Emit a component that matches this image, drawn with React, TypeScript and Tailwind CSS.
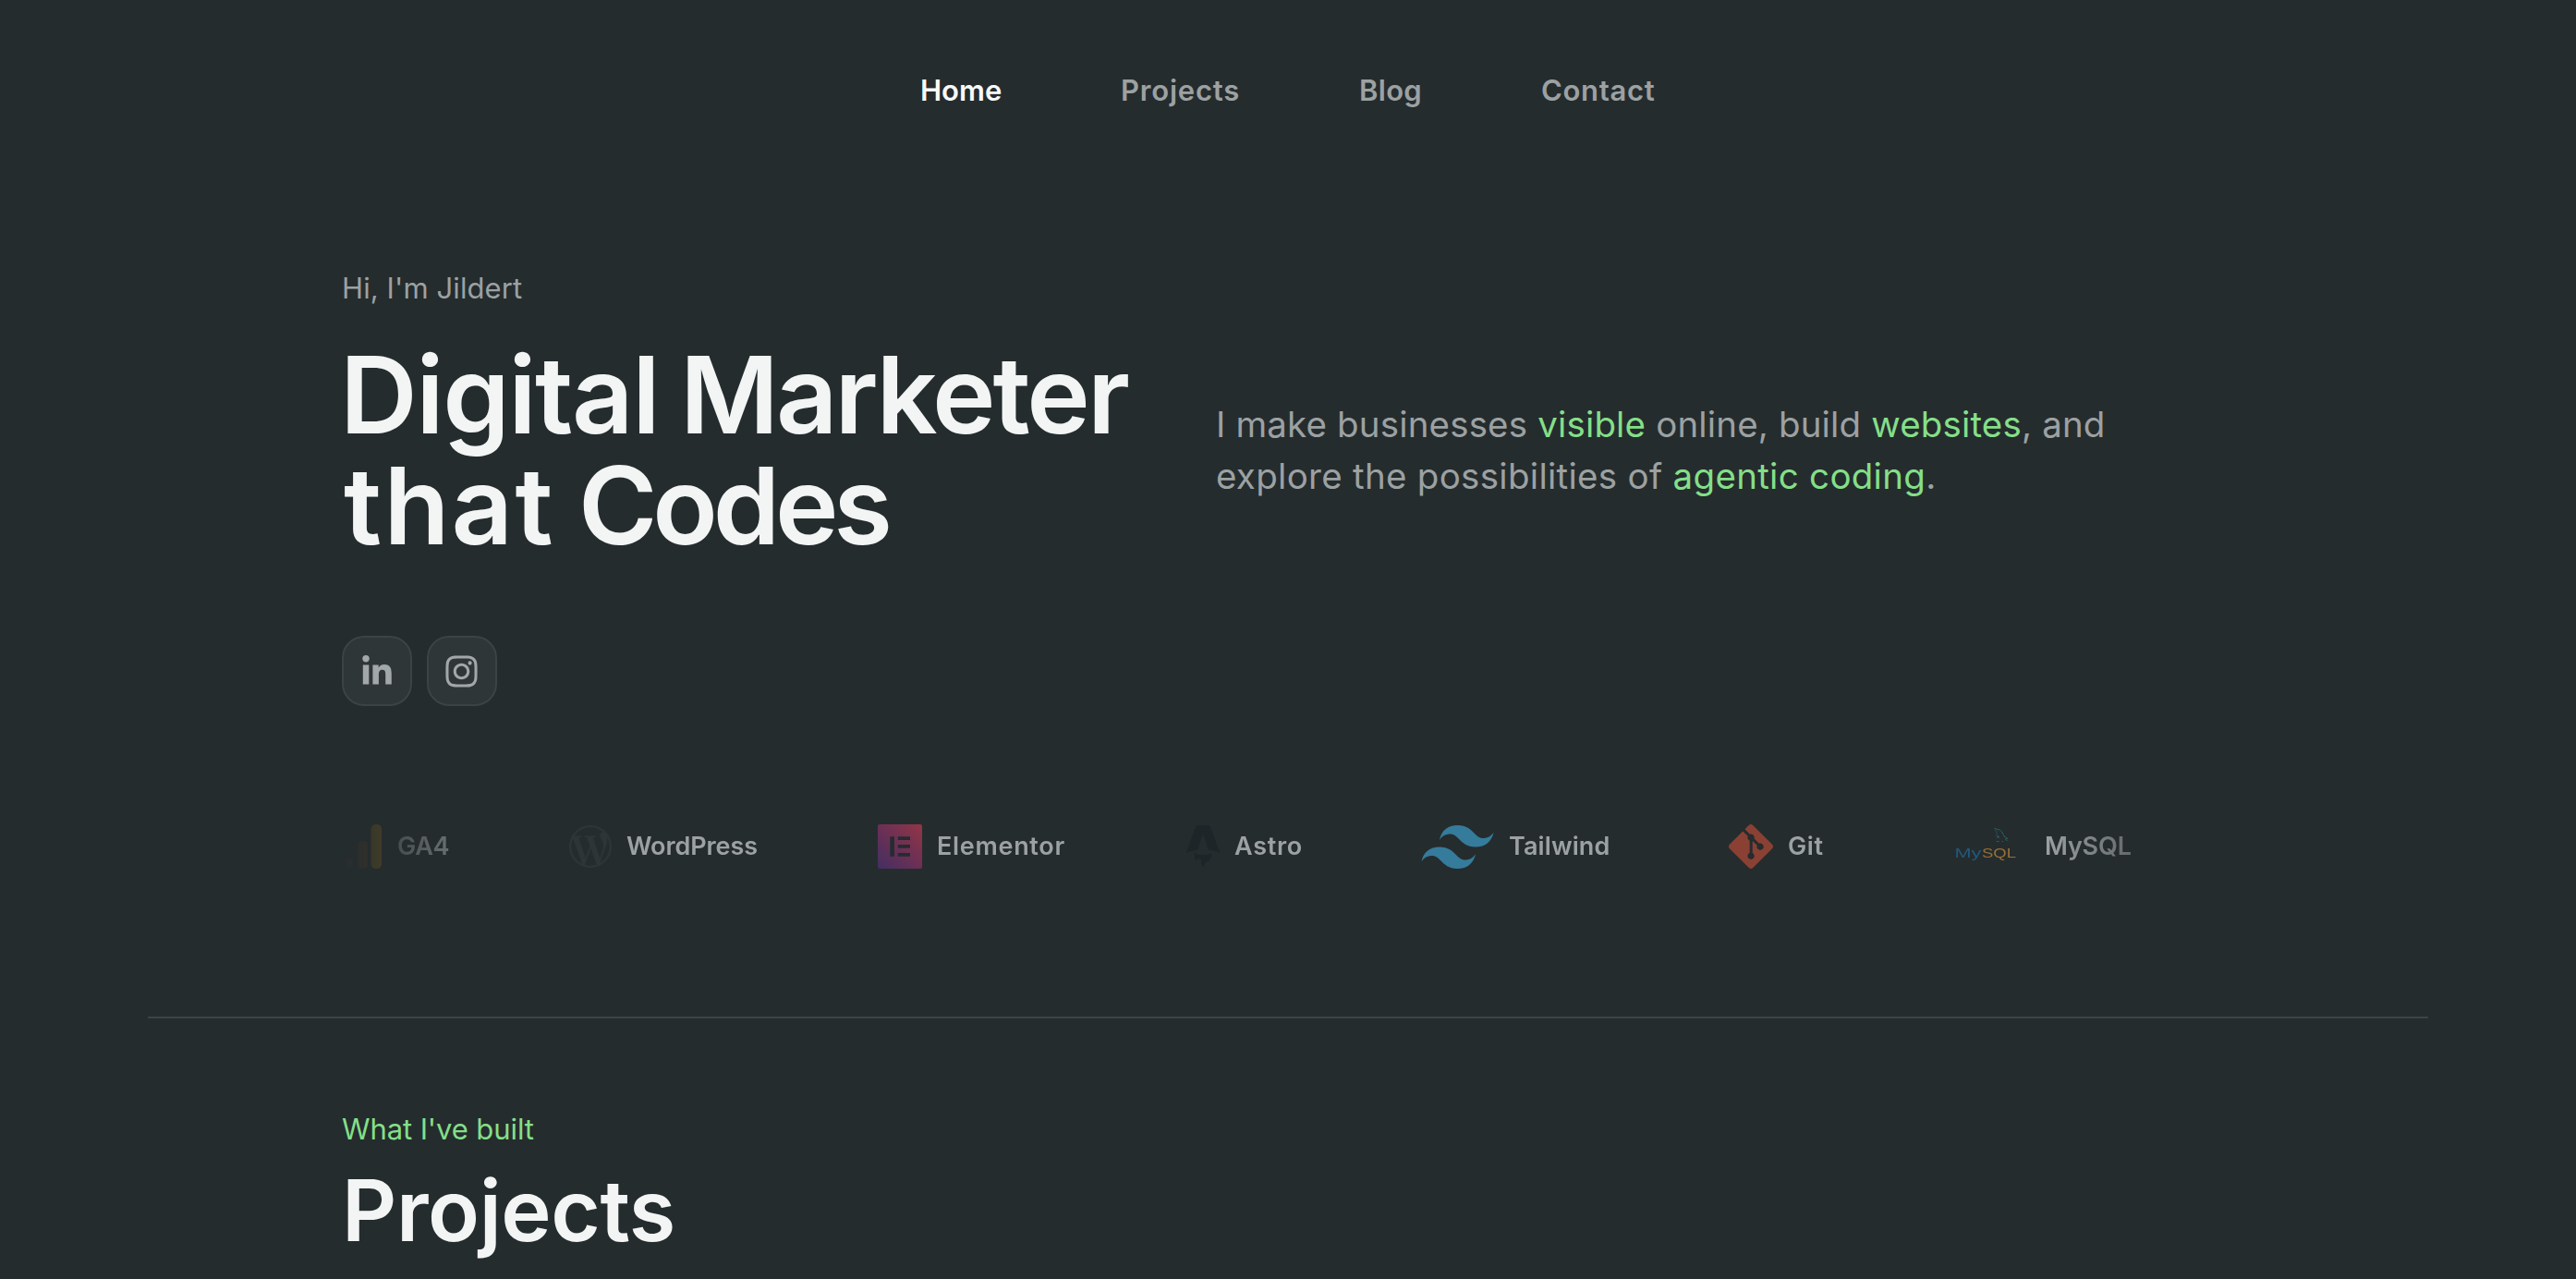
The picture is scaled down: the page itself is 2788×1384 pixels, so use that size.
import type { ReactNode } from "react";
import { FaInstagram, FaLinkedinIn } from "react-icons/fa";
import { SiAstro, SiGit, SiMysql, SiTailwindcss, SiWordpress } from "react-icons/si";

const links = [
  { label: "Home", className: "w-[217px] text-[#f8fafa]" },
  { label: "Projects", className: "w-[258px] tracking-[0.8px] text-[#9ca1a2]" },
  { label: "Blog", className: "w-[197px] tracking-[0.3px] text-[#9ca1a2]" },
  { label: "Contact", className: "tracking-[0.7px] text-[#9ca1a2]" },
];

function AnalyticsIcon() {
  return (
    <svg className="h-12 w-11 opacity-60" viewBox="0 0 44 48">
      <rect x="31.5" width="11.5" height="48" rx="5" fill="#f9ab00" />
      <rect x="17" y="18" width="11" height="30" rx="5" fill="#e37400" opacity="0.7" />
      <circle cx="6" cy="42" r="6" fill="#e37400" />
    </svg>
  );
}

function ElementorIcon() {
  return (
    <svg className="size-12" viewBox="0 0 48 48">
      <defs>
        <linearGradient id="elementor" x1="0" y1="1" x2="1" y2="0">
          <stop offset="0" stopColor="#422f62" />
          <stop offset="0.5" stopColor="#6c3055" />
          <stop offset="1" stopColor="#933546" />
        </linearGradient>
      </defs>
      <rect width="48" height="48" rx="2" fill="url(#elementor)" />
      <path
        fill="#252c2e"
        d="M13.3 13.3h4.6v21.4h-4.6zM21.8 13.3H35V17H21.8zM21.8 22H35v3.7H21.8zM21.8 31H35v3.7H21.8z"
      />
    </svg>
  );
}

function MysqlIcon() {
  return (
    <svg className="h-12 w-24" viewBox="0 0 96 48">
      <SiMysql x="57" y="3" width="26" height="24" viewBox="13.8 3.6 10.4 9.6" className="text-[#27787a]" />
      <g className="font-['Liberation_Sans']" fontSize="15.5">
        <text x="14.5" y="36.3" textLength="29" lengthAdjust="spacingAndGlyphs" fill="#23587a">
          My
        </text>
        <text x="44" y="36.3" textLength="37" lengthAdjust="spacingAndGlyphs" fill="#976f35">
          SQL
        </text>
      </g>
    </svg>
  );
}

const tools: { label: string; icon: ReactNode; box: string; text: string }[] = [
  { label: "GA4", icon: <AnalyticsIcon />, box: "w-[246px]", text: "tracking-[-0.3px]" },
  {
    label: "WordPress",
    icon: <SiWordpress className="size-[46px] text-[#2d3537]" />,
    box: "w-[334px]",
    text: "tracking-[-0.1px]",
  },
  { label: "Elementor", icon: <ElementorIcon />, box: "w-[334px]", text: "tracking-[0.7px]" },
  {
    label: "Astro",
    icon: <SiAstro className="h-12 w-9 text-[#1e2528]" viewBox="2.6 0 18.8 24" />,
    box: "w-[254px]",
    text: "tracking-[0.7px]",
  },
  {
    label: "Tailwind",
    icon: <SiTailwindcss className="h-[47px] w-[79px] text-[#357b9b]" viewBox="0 4.8 24 14.4" />,
    box: "w-[333px]",
    text: "tracking-[0.1px]",
  },
  { label: "Git", icon: <SiGit className="size-12 text-[#8a4133]" />, box: "w-[230px]", text: "tracking-[0.6px]" },
  { label: "MySQL", icon: <MysqlIcon />, box: "w-[317px]", text: "tracking-[-0.2px]" },
];

function SocialButton({ label, children }: { label: string; children: ReactNode }) {
  return (
    <a
      aria-label={label}
      className="flex size-[76px] items-center justify-center rounded-3xl border-2 border-[#3c4346] bg-[#2f3638] text-[#a2a7a8]"
    >
      {children}
    </a>
  );
}

function Accent({ children }: { children: ReactNode }) {
  return <span className="text-[#84df88]">{children}</span>;
}

export default function App() {
  return (
    <div className="h-[1384px] overflow-hidden bg-[#252c2e] font-['Inter',sans-serif] text-[#9ca1a2]">
      <nav className="flex pt-[74px] pl-[996px] text-[31px] leading-[48px] font-semibold">
        {links.map((l) => (
          <a key={l.label} className={l.className}>
            {l.label}
          </a>
        ))}
      </nav>

      <main className="mx-auto w-[2048px] pt-[166px]">
        <p className="text-[31px] leading-[48px] tracking-[0.1px]">Hi, I'm Jildert</p>
        <div className="mt-[31px] flex items-center">
          <h1 className="w-[946px] text-[116px] leading-[120px] font-semibold text-[#f3f5f5]">
            <span className="-ml-0.5 flex">
              <span className="w-[368px] tracking-[-1.5px]">Digital</span>
              <span className="tracking-[-3px]">Marketer</span>
            </span>
            <span className="ml-0.5 flex">
              <span className="w-[254px] tracking-[2.2px]">that</span>
              <span className="tracking-[-5.2px]">Codes</span>
            </span>
          </h1>
          <p className="text-[38.5px] leading-14 whitespace-nowrap">
            <span className="block tracking-[0.15px]">
              I make businesses <Accent>visible</Accent> online, build <Accent>websites</Accent>, and
            </span>
            <span className="block tracking-[0.29px]">
              explore the possibilities of <Accent>agentic coding</Accent>.
            </span>
          </p>
        </div>
        <div className="mt-[81px] flex gap-4">
          <SocialButton label="LinkedIn">
            <FaLinkedinIn className="mt-0.5 size-9" />
          </SocialButton>
          <SocialButton label="Instagram">
            <FaInstagram className="-ml-0.5 size-[39px]" />
          </SocialButton>
        </div>
        <div className="mt-32 overflow-hidden [mask-image:linear-gradient(to_right,transparent,black_10%,black_90%,transparent)]">
          <div className="flex w-max">
            {tools.map((t) => (
              <div key={t.label} className={`flex h-12 items-center gap-4 ${t.box}`}>
                {t.icon}
                <span className={`text-[27px] leading-10 font-semibold ${t.text}`}>{t.label}</span>
              </div>
            ))}
          </div>
        </div>
      </main>

      <hr className="mx-40 mt-40 border-t-2 border-[#3c4446]" />

      <section className="mx-auto w-[2048px] pt-24">
        <p className="text-[31px] leading-[48px] tracking-[-0.1px] text-[#84df88]">What I've built</p>
        <h2 className="mt-4 text-[92px] leading-[96px] font-semibold tracking-[-0.4px] text-[#f3f5f5]">Projects</h2>
      </section>
    </div>
  );
}
